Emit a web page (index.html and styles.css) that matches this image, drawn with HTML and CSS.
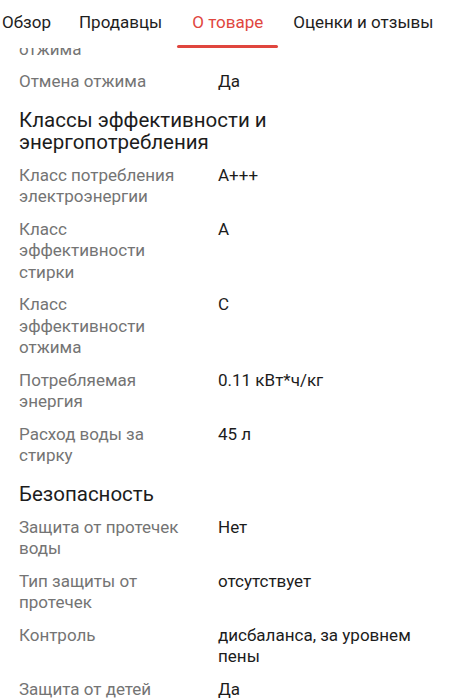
FILE: index.html
```html
<!DOCTYPE html>
<html lang="ru">
<head>
<meta charset="utf-8">
<link rel="stylesheet" href="styles.css">
</head>
<body>
<div class="page">
  <nav class="tabs">
    <div class="tab-strip">
      <span class="tab">Обзор</span>
      <span class="tab">Продавцы</span>
      <span class="tab active">О товаре</span>
      <span class="tab">Оценки и отзывы</span>
    </div>
  </nav>
  <main class="content">
    <div class="row"><div class="label">отжима</div><div class="value"></div></div>
    <div class="row"><div class="label">Отмена отжима</div><div class="value">Да</div></div>

    <h2 class="section">Классы эффективности и энергопотребления</h2>
    <div class="row"><div class="label">Класс потребления электроэнергии</div><div class="value">A+++</div></div>
    <div class="row"><div class="label">Класс эффективности стирки</div><div class="value">A</div></div>
    <div class="row"><div class="label">Класс эффективности отжима</div><div class="value">C</div></div>
    <div class="row"><div class="label">Потребляемая энергия</div><div class="value">0.11 кВт*ч/кг</div></div>
    <div class="row"><div class="label">Расход воды за стирку</div><div class="value">45 л</div></div>

    <h2 class="section">Безопасность</h2>
    <div class="row"><div class="label">Защита от протечек воды</div><div class="value">Нет</div></div>
    <div class="row"><div class="label">Тип защиты от протечек</div><div class="value">отсутствует</div></div>
    <div class="row"><div class="label">Контроль</div><div class="value">дисбаланса, за уровнем пены</div></div>
    <div class="row"><div class="label">Защита от детей</div><div class="value">Да</div></div>
  </main>
</div>
</body>
</html>
```
FILE: styles.css
```css
* { box-sizing: border-box; }
html, body {
  margin: 0;
  padding: 0;
  background: #ffffff;
}
body {
  font-family: Roboto, "Noto Sans", sans-serif;
  color: #1c1c1c;
}
.page {
  width: 456px;
  height: 700px;
  overflow: hidden;
  display: flex;
  flex-direction: column;
}
.tabs {
  position: relative;
  z-index: 2;
  height: 48px;
  flex-shrink: 0;
  background: #ffffff;
}
.tab-strip {
  display: flex;
  margin-left: -13px;
  white-space: nowrap;
  height: 48px;
}
.tab {
  position: relative;
  padding: 0 15px;
  font-size: 17px;
  line-height: 45px;
  color: #1e1e1e;
}
.tab:first-child {
  padding-right: 13px;
}
.tab.active {
  color: #e0463e;
}
.tab.active::after {
  content: "";
  position: absolute;
  left: 0;
  right: 0;
  bottom: 0;
  height: 3px;
  border-radius: 1.5px;
  background: #e0463e;
}
.content {
  margin-top: -15px;
  padding: 0 19px;
}
.row {
  display: grid;
  grid-template-columns: 165px 1fr;
  column-gap: 34px;
  padding: 5.5px 0;
  font-size: 17px;
  line-height: 21.5px;
}
.label {
  color: #747474;
}
.value {
  color: #1c1c1c;
}
.section {
  margin: 0;
  padding: 11px 0 6px;
  font-size: 20.5px;
  font-weight: 400;
  line-height: 22px;
  color: #1c1c1c;
}
```
